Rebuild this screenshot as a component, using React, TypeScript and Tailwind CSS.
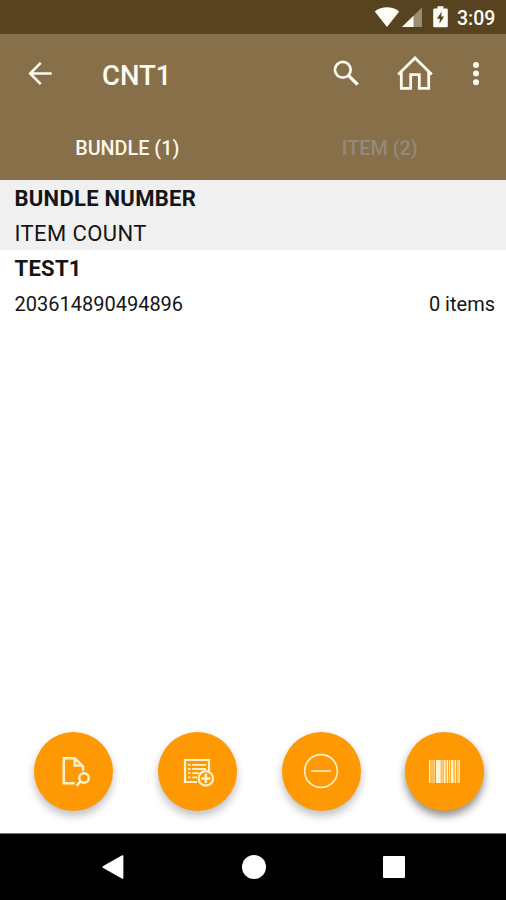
import type { ReactNode } from 'react'

const bundles = [
  { name: 'TEST1', number: '203614890494896', count: 0 },
]

const tabs = [
  { label: 'BUNDLE (1)', className: 'text-[#fdf8ec]' },
  { label: 'ITEM (2)', className: 'text-[#948a7c]' },
]

function StatusBar() {
  return (
    <div className="flex h-[34px] shrink-0 items-center bg-[#574320] pl-[374px] text-[#fffdf5]">
      <svg width="26" height="34" viewBox="0 0 26 34" fill="currentColor">
        <path d="M0.8 11.4 C8 5.8 18 5.8 25.2 11.4 L13 27 Z" />
      </svg>
      <svg className="ml-[2px]" width="20" height="34" viewBox="0 0 20 34" fill="currentColor">
        <path d="M0 27 L20 7.5 V27 Z" opacity="0.4" />
        <path d="M0 27 L11.5 15.8 V27 Z" />
      </svg>
      <svg className="ml-[11px]" width="15" height="34" viewBox="0 0 15 34">
        <path
          fill="currentColor"
          d="M4.5 6.3 H10.5 V8.4 H13.5 Q14.8 8.4 14.8 9.7 V26 Q14.8 27.3 13.5 27.3 H1.5 Q0.2 27.3 0.2 26 V9.7 Q0.2 8.4 1.5 8.4 H4.5 Z"
        />
        <path fill="#574320" d="M8.8 11.6 L3.9 18.7 H6.9 L6.4 23.8 L11.1 16.6 H8.2 Z" />
      </svg>
      <span className="ml-[9px] mt-[4px] text-[19.5px] leading-none font-medium">3:09</span>
    </div>
  )
}

function Toolbar() {
  return (
    <div className="flex h-[78px] items-center text-[#fffaf0]">
      <svg className="ml-[27px]" width="26" height="26" viewBox="0 0 26 26" fill="none" stroke="currentColor" strokeWidth="2.6">
        <path d="M13.7 2.9 L3.2 13.5 L13.7 24.1 M3.4 13.5 H24.7" />
      </svg>
      <h1 className="ml-[49px] mt-[6px] w-[226px] text-[27.5px] leading-none font-medium">CNT1</h1>
      <svg className="ml-[4px]" width="28" height="28" viewBox="0 0 28 28" fill="none" stroke="currentColor">
        <circle cx="10.8" cy="10.8" r="7.9" strokeWidth="2.7" />
        <path d="M16.6 16.6 L25.7 25.6" strokeWidth="3.4" />
      </svg>
      <svg className="ml-[37px]" width="36" height="36" viewBox="0 0 36 36" fill="none" stroke="currentColor" strokeWidth="2.8">
        <path d="M1.2 19.4 L18 3 L34.8 19.4" />
        <path d="M4.3 17 V33.4 H13.7 V19.6 H22.3 V33.4 H31.7 V17" />
      </svg>
      <svg className="ml-[39px]" width="8" height="26" viewBox="0 0 8 26" fill="currentColor">
        <circle cx="4" cy="5" r="3" />
        <circle cx="4" cy="13.6" r="3" />
        <circle cx="4" cy="22.2" r="3" />
      </svg>
    </div>
  )
}

function Fab({ raised, children }: { raised?: boolean; children: ReactNode }) {
  return (
    <button
      className={`flex size-[79px] items-center justify-center rounded-full bg-[#fe9903] text-[#fff2cc] ${
        raised ? 'shadow-[0_5px_9px_rgba(0,0,0,0.45)]' : 'shadow-[0_5px_8px_rgba(0,0,0,0.25)]'
      }`}
    >
      {children}
    </button>
  )
}

const bars = [
  [0, 1.4], [2.6, 0.8], [4.6, 1], [7, 4.8], [12.6, 1], [14.6, 2],
  [17.6, 1.6], [20.2, 1], [22, 2.6], [25.6, 1.4], [27.8, 0.8], [29.4, 1.4],
]

function Actions() {
  return (
    <div className="mt-auto mb-[22.5px] flex justify-between pr-[21.5px] pl-[34px]">
      <Fab>
        <svg width="32" height="32" viewBox="0 0 32 32" fill="none" stroke="currentColor" strokeWidth="2.5">
          <path d="M16.6 28.3 H5.8 V3.2 H16.7 L25 11.4 V15.8" />
          <path d="M16.7 3.2 V10.6 H25" />
          <circle cx="26" cy="23" r="4.8" />
          <path d="M22.5 26.4 L18.6 30.6" />
        </svg>
      </Fab>
      <Fab>
        <svg className="ml-[3px]" width="32" height="32" viewBox="0 0 32 32" fill="none" stroke="currentColor" strokeWidth="2.2">
          <path d="M14 27 H2 V5 H26 V16" />
          <path d="M5 9.8 H7.6 M9.2 9.8 H23 M5 14 H7.6 M9.2 14 H23 M5 18.2 H7.6 M9.2 18.2 H16 M5 22.4 H7.6 M9.2 22.4 H14" strokeWidth="1.8" />
          <circle cx="22.8" cy="23.4" r="7.2" />
          <path d="M22.8 18.8 V28 M18.2 23.4 H27.4" strokeWidth="2.5" />
        </svg>
      </Fab>
      <Fab>
        <svg width="36" height="36" viewBox="0 0 36 36" fill="none" stroke="currentColor" strokeWidth="1.6">
          <circle cx="18" cy="18" r="16.4" />
          <path d="M8 18 H28" />
        </svg>
      </Fab>
      <Fab raised>
        <svg width="31" height="23" viewBox="0 0 31 23" fill="currentColor">
          {bars.map(([x, w]) => (
            <rect key={x} x={x} y="0" width={w} height="23" />
          ))}
        </svg>
      </Fab>
    </div>
  )
}

function NavigationBar() {
  return (
    <div className="flex h-[67px] shrink-0 items-center justify-between border-t border-[#777] bg-black pr-[101px] pl-[102px]">
      <svg width="22" height="24" viewBox="0 0 22 24" fill="white">
        <path d="M0.8 11.2 Q0 12 0.8 12.8 L20.2 23.7 Q21.4 24 21.4 22.8 V1.2 Q21.4 0 20.2 0.3 Z" />
      </svg>
      <div className="size-[24px] rounded-full bg-white" />
      <div className="size-[22px] rounded-[1px] bg-white" />
    </div>
  )
}

export default function App() {
  return (
    <div className="flex h-[900px] w-[506px] flex-col overflow-hidden bg-white font-[Roboto,sans-serif] text-[#151515]">
      <StatusBar />

      <header className="h-[146px] shrink-0 bg-[#876f4a]">
        <Toolbar />
        <div className="grid grid-cols-2 pt-[26px] pl-px text-center text-[19.8px] leading-[22px] font-medium">
          {tabs.map((tab) => (
            <div key={tab.label} className={tab.className}>
              {tab.label}
            </div>
          ))}
        </div>
      </header>

      {/* Column captions */}
      <div className="h-[70px] shrink-0 bg-[#f0f0f0] px-[14.5px] text-[22px] leading-[35px]">
        <div className="pt-[1px] font-bold tracking-[0.28px]">BUNDLE NUMBER</div>
        <div className="tracking-[0.4px]">ITEM COUNT</div>
      </div>

      {bundles.map((bundle) => (
        <div key={bundle.number} className="pr-[11px] pl-[14.5px] leading-[35px]">
          <div className="pt-[1px] text-[22px] font-bold tracking-[0.28px]">{bundle.name}</div>
          <div className="flex justify-between pt-[1px] text-[20px]">
            <span>{bundle.number}</span>
            <span>{bundle.count} items</span>
          </div>
        </div>
      ))}

      <Actions />
      <NavigationBar />
    </div>
  )
}
